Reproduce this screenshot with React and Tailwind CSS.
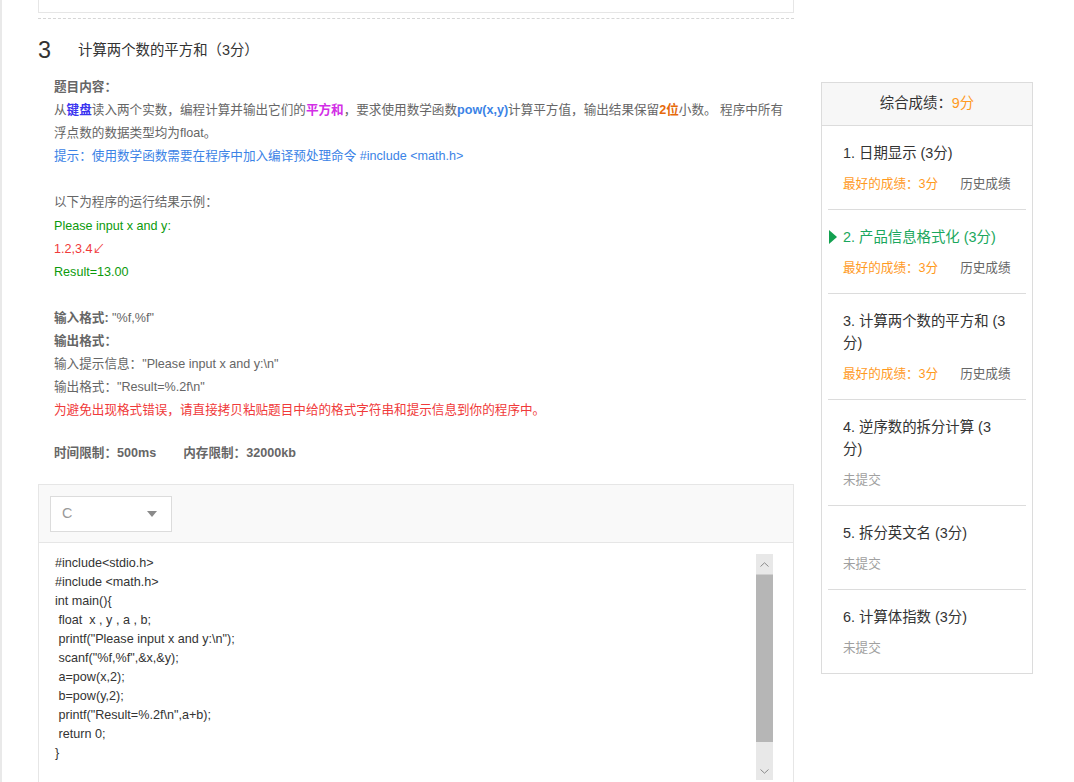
import React from 'react';

const codeLines = [
    '#include<stdio.h>',
    '#include <math.h>',
    'int main(){',
    ' float  x , y , a , b;',
    ' printf("Please input x and y:\\n");',
    ' scanf("%f,%f",&x,&y);',
    ' a=pow(x,2);',
    ' b=pow(y,2);',
    ' printf("Result=%.2f\\n",a+b);',
    ' return 0;',
    '}',
];

const problems = [
    { title: '1. 日期显示 (3分)', best: true },
    { title: '2. 产品信息格式化 (3分)', best: true, active: true },
    { title: '3. 计算两个数的平方和 (3分)', best: true },
    { title: '4. 逆序数的拆分计算 (3分)' },
    { title: '5. 拆分英文名 (3分)' },
    { title: '6. 计算体指数 (3分)' },
];

function ScoreItem({ item, last }) {
    return (
        <div className={`mx-[6px] pl-[15px] pr-[19px] pt-[16px] pb-[15px] relative ${last ? '' : 'border-b border-[#dcdcdc]'}`}>
            {item.active && (
                <svg className="absolute left-[1px] top-[20px]" width="8" height="14" viewBox="0 0 8 14">
                    <path d="M0 0 L8 7 L0 14 Z" fill="#12a150" />
                </svg>
            )}
            <div className={`text-[14.4px] leading-[22px] break-all ${item.active ? 'text-[#1aa75d]' : 'text-[#333]'}`}>
                {item.title}
            </div>
            <div className="mt-[10px] h-[20px] text-[12.6px] leading-[20px] flex whitespace-nowrap">
                {item.best ? (
                    <>
                        <span className="text-[#ff9a1e]">最好的成绩：3分</span>
                        <span className="ml-[22px] text-[#666]">历史成绩</span>
                    </>
                ) : (
                    <span className="text-[#a0a0a0]">未提交</span>
                )}
            </div>
        </div>
    );
}

export default function App() {
    return (
        <div className="h-[782px] overflow-hidden bg-white border-l-[2px] border-[#e9e9e9] font-['Liberation_Sans','Noto_Sans_CJK_SC',sans-serif]">
            <div className="flex items-start">
                {/* Left column: problem */}
                <div className="ml-[36px] w-[756px] shrink-0">
                    <div className="h-[13px] border-x border-b border-[#e6e6e6]"></div>
                    <div className="mt-[5px] border-t border-dashed border-[#d6d6d6]"></div>

                    <div className="mt-[16px] h-[32px] flex items-center">
                        <span className="w-[40px] text-[23.4px] text-[#333]">3</span>
                        <span className="text-[14.4px] text-[#333]">计算两个数的平方和（3分）</span>
                    </div>

                    <div className="mt-[9px] pl-[16px] text-[12.6px] leading-[23px] text-[#666]">
                        <div className="font-bold">题目内容：</div>
                        <div>
                            从<b className="text-[#3a33f0]">键盘</b>读入两个实数，编程计算并输出它们的<b className="text-[#d22ee6]">平方和</b>，要求使用数学函数<b className="text-[#3b83e6]">pow(x,y)</b>计算平方值，输出结果保留<b className="text-[#e66a0a]">2位</b>小数。 程序中所有<br />
                            浮点数的数据类型均为float。
                        </div>
                        <div className="text-[#3b83e6]">提示：使用数学函数需要在程序中加入编译预处理命令 #include &lt;math.h&gt;</div>
                        <div className="h-[23px]"></div>
                        <div>以下为程序的运行结果示例：</div>
                        <div className="mt-[1px] text-[#0c9a0c]">Please input x and y:</div>
                        <div className="text-[#f03a3a]">1.2,3.4↙</div>
                        <div className="text-[#0c9a0c]">Result=13.00</div>
                        <div className="h-[23px]"></div>
                        <div><b>输入格式:</b> "%f,%f"</div>
                        <div className="font-bold">输出格式：</div>
                        <div>输入提示信息："Please input x and y:\n"</div>
                        <div>输出格式："Result=%.2f\n"</div>
                        <div className="text-[#f03a3a]">为避免出现格式错误，请直接拷贝粘贴题目中给的格式字符串和提示信息到你的程序中。</div>
                        <div className="mt-[20px] font-bold flex">
                            <span>时间限制：500ms</span>
                            <span className="ml-[27px]">内存限制：32000kb</span>
                        </div>
                    </div>

                    {/* Code editor */}
                    <div className="mt-[19px] border border-[#e6e6e6]">
                        <div className="bg-[#f9f9f9] border-b border-[#e6e6e6] pl-[11px] pt-[11px] pb-[10px]">
                            <div className="w-[122px] h-[36px] bg-white border border-[#dcdcdc] flex items-center justify-between pl-[11px] pr-[14px]">
                                <span className="text-[14.4px] text-[#999]">C</span>
                                <svg width="10" height="6" viewBox="0 0 10 6">
                                    <path d="M0 0 L10 0 L5 6 Z" fill="#8a8a8a" />
                                </svg>
                            </div>
                        </div>
                        <div className="flex h-[260px]">
                            <div className="flex-1 pl-[16px] pt-[11px] text-[12.6px] leading-[19px] text-[#333] whitespace-pre">
                                {codeLines.map((l, i) => (
                                    <div key={i}>{l}</div>
                                ))}
                            </div>
                            <div className="mt-[11px] mr-[20px] w-[17px] h-[226px] bg-[#e8e8e8] flex flex-col">
                                <div className="h-[20px] flex items-center justify-center">
                                    <svg width="9" height="5" viewBox="0 0 9 5">
                                        <path d="M0.5 4.5 L4.5 0.8 L8.5 4.5" fill="none" stroke="#8a8a8a" strokeWidth="1" />
                                    </svg>
                                </div>
                                <div className="h-[168px] bg-[#b6b6b6] border-t border-[#cfcfcf]"></div>
                                <div className="flex-1 flex items-end justify-center pb-[6px]">
                                    <svg width="9" height="5" viewBox="0 0 9 5">
                                        <path d="M0.5 0.5 L4.5 4.2 L8.5 0.5" fill="none" stroke="#8a8a8a" strokeWidth="1" />
                                    </svg>
                                </div>
                            </div>
                        </div>
                    </div>
                </div>

                {/* Right column: score panel */}
                <div className="ml-[27px] mt-[82px] w-[212px] shrink-0 border border-[#dcdcdc]">
                    <div className="h-[43px] bg-[#f7f7f7] border-b border-[#dcdcdc] flex items-center justify-center text-[14.4px]">
                        <span className="text-[#333]">综合成绩：</span>
                        <span className="text-[#ff9a1e]">9分</span>
                    </div>
                    {problems.map((p, i) => (
                        <ScoreItem key={i} item={p} last={i === problems.length - 1} />
                    ))}
                </div>
            </div>
        </div>
    );
}
